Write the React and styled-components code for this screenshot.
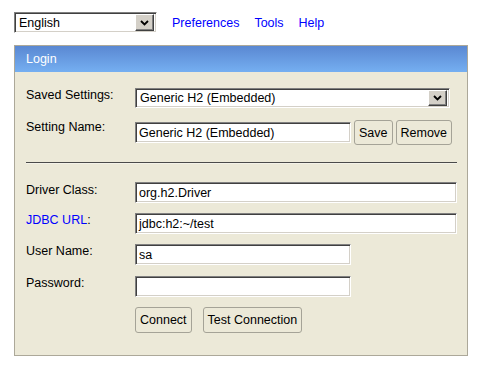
import React from 'react';
import styled, { createGlobalStyle } from 'styled-components';

const GlobalStyle = createGlobalStyle`
    body {
        margin: 0;
        background: #ffffff;
        font-family: "Liberation Sans", Arial, sans-serif;
        font-size: 12.5px;
        color: #000000;
    }
`;

const Page = styled.div`
    width: 454px;
    padding: 12px 0 0 14px;
`;

const TopBar = styled.div`
    display: flex;
    align-items: center;
    height: 21px;
`;

const NavLinks = styled.div`
    display: flex;
    gap: 15px;
    margin-left: 15px;
`;

const Link = styled.a`
    color: #0000ff;
    text-decoration: none;
    cursor: pointer;
`;

const Sunken = styled.div`
    box-sizing: border-box;
    width: ${p => p.$width}px;
    height: ${p => p.$height || 21}px;
    background: #ffffff;
    border: 1px solid;
    border-color: #808080 #ffffff #ffffff #808080;
    box-shadow: inset 1px 1px #404040, inset -1px -1px #d4d0c8;
    display: flex;
    align-items: center;
    padding: 0 2px 0 3px;
    white-space: nowrap;
`;

const SelectText = styled.span`
    flex: 1;
    padding-left: 1px;
`;

const ArrowBox = styled.span`
    box-sizing: border-box;
    width: 19px;
    height: ${p => p.$height || 17}px;
    background: #d4d0c8;
    border: 1px solid;
    border-color: #ffffff #404040 #404040 #ffffff;
    box-shadow: inset -1px -1px #808080;
    display: flex;
    align-items: center;
    justify-content: center;
`;

const Panel = styled.div`
    box-sizing: border-box;
    width: 454px;
    margin-top: 12px;
    border: 1px solid #aca899;
    background: #ece9d8;
`;

const PanelHeader = styled.div`
    height: 26px;
    line-height: 26px;
    padding-left: 11px;
    color: #ffffff;
    background: linear-gradient(to bottom, #5a88d2, #75aff1);
`;

const PanelBody = styled.div`
    padding: 16px 10px 22px 11px;
    display: flex;
    flex-direction: column;
`;

const Row = styled.div`
    display: flex;
    align-items: flex-start;
    margin-top: ${p => p.$top || 0}px;
`;

const Label = styled.div`
    width: 109px;
    flex: none;
    padding-top: ${p => p.$pad || 0}px;
`;

const Fields = styled.div`
    display: flex;
    align-items: center;
    gap: ${p => p.$gap || 0}px;
`;

const Button = styled.button`
    box-sizing: border-box;
    height: ${p => p.$height || 25}px;
    padding: 0 4px;
    font: inherit;
    color: #000000;
    background: #ece9d8;
    border: 1px solid #a5a397;
    border-radius: 3px;
`;

const Rule = styled.div`
    height: 1px;
    margin-top: 17px;
    background: #4a4a4a;
    border-bottom: 1px solid #f4f2e8;
`;

const Chevron = () => (
    <svg width="9" height="6" viewBox="0 0 9 6">
        <polyline points="1,1 4.5,4.5 8,1" fill="none" stroke="#000" strokeWidth="1.8" />
    </svg>
);

const App = () => {
    return <Page>
        <GlobalStyle />
        <TopBar>
            <Sunken $width={143} $height={21}>
                <SelectText>English</SelectText>
                <ArrowBox $height={17}><Chevron /></ArrowBox>
            </Sunken>
            <NavLinks>
                <Link>Preferences</Link>
                <Link>Tools</Link>
                <Link>Help</Link>
            </NavLinks>
        </TopBar>
        <Panel>
            <PanelHeader>Login</PanelHeader>
            <PanelBody>
                <Row>
                    <Label>Saved Settings:</Label>
                    <Sunken $width={315} $height={20}>
                        <SelectText>Generic H2 (Embedded)</SelectText>
                        <ArrowBox $height={16}><Chevron /></ArrowBox>
                    </Sunken>
                </Row>
                <Row $top={12}>
                    <Label>Setting Name:</Label>
                    <Fields $gap={3}>
                        <Sunken $width={216} $height={21}>Generic H2 (Embedded)</Sunken>
                        <Fields $gap={3}>
                            <Button>Save</Button>
                            <Button>Remove</Button>
                        </Fields>
                    </Fields>
                </Row>
                <Rule />
                <Row $top={18}>
                    <Label $pad={1}>Driver Class:</Label>
                    <Sunken $width={322}>org.h2.Driver</Sunken>
                </Row>
                <Row $top={10}>
                    <Label><Link>JDBC URL</Link>:</Label>
                    <Sunken $width={322}>jdbc:h2:~/test</Sunken>
                </Row>
                <Row $top={10}>
                    <Label>User Name:</Label>
                    <Sunken $width={216}>sa</Sunken>
                </Row>
                <Row $top={11}>
                    <Label>Password:</Label>
                    <Sunken $width={216}></Sunken>
                </Row>
                <Row $top={10}>
                    <Label />
                    <Fields $gap={11}>
                        <Button $height={26}>Connect</Button>
                        <Button $height={26}>Test Connection</Button>
                    </Fields>
                </Row>
            </PanelBody>
        </Panel>
    </Page>
}

export default App
